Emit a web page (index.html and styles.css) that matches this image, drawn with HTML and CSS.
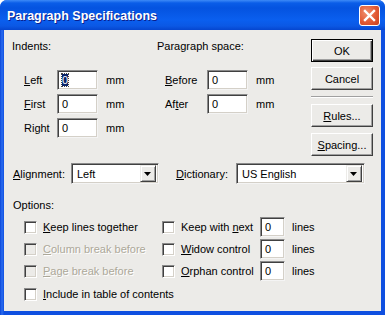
FILE: index.html
```html
<!DOCTYPE html>
<html>
<head>
<meta charset="utf-8">
<link rel="stylesheet" href="styles.css">
</head>
<body>
<div class="win">
  <div class="titlebar">
    <span class="title">Paragraph Specifications</span>
    <span class="close"><svg width="13" height="13" viewBox="0 0 13 13"><path d="M2 2 L11 11 M11 2 L2 11" stroke="#fff" stroke-width="2.4" stroke-linecap="square"/></svg></span>
  </div>
  <div class="client">
    <div class="top">
      <div class="group indents">
        <div class="heading">Indents:</div>
        <div class="fields">
          <span class="lbl"><u>L</u>eft</span><span class="edit"><span class="sel">0</span></span><span class="unit">mm</span>
          <span class="lbl"><u>F</u>irst</span><span class="edit">0</span><span class="unit">mm</span>
          <span class="lbl">Right</span><span class="edit">0</span><span class="unit">mm</span>
        </div>
      </div>
      <div class="group space">
        <div class="heading">Paragraph space:</div>
        <div class="fields">
          <span class="lbl"><u>B</u>efore</span><span class="edit">0</span><span class="unit">mm</span>
          <span class="lbl">Af<u>t</u>er</span><span class="edit">0</span><span class="unit">mm</span>
        </div>
      </div>
      <div class="buttons">
        <div class="btn default">OK</div>
        <div class="btn">Cancel</div>
        <div class="sep"></div>
        <div class="btn"><u>R</u>ules...</div>
        <div class="btn"><u>S</u>pacing...</div>
      </div>
    </div>
    <div class="combos">
      <span class="clbl"><u>A</u>lignment:</span>
      <span class="combo align"><span class="cval">Left</span><span class="arrow"><svg width="7" height="4" viewBox="0 0 7 4"><path d="M0 0 H7 L3.5 4 Z" fill="#000"/></svg></span></span>
      <span class="clbl dict"><u>D</u>ictionary:</span>
      <span class="combo dictc"><span class="cval">US English</span><span class="arrow"><svg width="7" height="4" viewBox="0 0 7 4"><path d="M0 0 H7 L3.5 4 Z" fill="#000"/></svg></span></span>
    </div>
    <div class="heading opts">Options:</div>
    <div class="options">
      <label class="chk"><span class="box"></span><span><u>K</u>eep lines together</span></label>
      <label class="chk"><span class="box"></span><span>Keep with <u>n</u>ext</span></label>
      <span class="edit small">0</span><span class="unit">lines</span>

      <label class="chk disabled"><span class="box"></span><span><u>C</u>olumn break before</span></label>
      <label class="chk"><span class="box"></span><span><u>W</u>idow control</span></label>
      <span class="edit small">0</span><span class="unit">lines</span>

      <label class="chk disabled"><span class="box"></span><span><u>P</u>age break before</span></label>
      <label class="chk"><span class="box"></span><span><u>O</u>rphan control</span></label>
      <span class="edit small">0</span><span class="unit">lines</span>

      <label class="chk wide"><span class="box"></span><span><u>I</u>nclude in table of contents</span></label>
    </div>
  </div>
</div>
</body>
</html>
```

FILE: styles.css
```css
* { box-sizing: border-box; }
html, body { margin: 0; padding: 0; background: #fff; }
body { font-family: "Liberation Sans", Arial, sans-serif; font-size: 11px; color: #000; }
u { text-decoration: underline; text-underline-offset: 1px; }

.win {
  width: 385px;
  height: 315px;
  border-radius: 7px 7px 0 0;
  display: flex;
  flex-direction: column;
  padding: 0 4px 4px 4px;
  background: linear-gradient(90deg, #0b46d8 0, #2a6cf0 2px, #0f4fe0 4px, #0f4fe0 381px);
}
.titlebar {
  height: 30px;
  margin: 0 -4px;
  padding: 0 5px 0 7px;
  border-radius: 7px 7px 0 0;
  display: flex;
  align-items: center;
  justify-content: space-between;
  background: linear-gradient(180deg, #3d8af7 0, #0a5de8 3px, #0453e0 8px, #0a5fef 20px, #0b58e4 26px, #0546cf 30px);
}
.title {
  color: #fff;
  font-family: "Liberation Sans", Arial, sans-serif;
  font-weight: bold;
  font-size: 12.5px;
  letter-spacing: 0;
  text-shadow: 1px 1px 0 #0a1e8c;
  margin-top: 1px;
}
.close {
  width: 21px;
  height: 21px;
  border: 1px solid #fff;
  border-radius: 3px;
  background: radial-gradient(circle at 35% 35%, #f0906f 0, #e25a35 55%, #c8401c 100%);
  display: flex;
  align-items: center;
  justify-content: center;
  margin-top: 1px;
}
.client {
  flex: 1;
  background: #ecebe8;
  padding: 9px 8px 0 8px;
}
.top { display: flex; }
.heading { height: 14px; line-height: 14px; }
.group.indents { width: 145px; }
.group.space { width: 154px; }
.fields {
  display: grid;
  row-gap: 4px;
  align-items: center;
  margin-top: 17px;
  grid-auto-rows: 20px;
}
.indents .fields { grid-template-columns: 33px 41px auto; margin-left: 12px; }
.space .fields { grid-template-columns: 42px 41px auto; margin-left: 8px; }
.lbl { line-height: 14px; }
.unit { margin-left: 8px; }
.edit {
  height: 20px;
  background: #fff;
  border-top: 1px solid #8a8a8a;
  border-left: 1px solid #8a8a8a;
  border-right: 1px solid #f4f4f4;
  border-bottom: 1px solid #f4f4f4;
  box-shadow: inset 1px 1px 0 #404040, inset -1px -1px 0 #d4d0c8;
  padding: 3px 0 0 4px;
  line-height: 13px;
}
.sel { background: #0a246a; color: #fff; outline: 1px dotted #444; }

.buttons { width: 62px; display: flex; flex-direction: column; }
.btn {
  height: 23px;
  display: flex;
  align-items: center;
  justify-content: center;
  background: #ecebe8;
  border-top: 1px solid #fff;
  border-left: 1px solid #fff;
  border-right: 1px solid #404040;
  border-bottom: 1px solid #404040;
  box-shadow: inset -1px -1px 0 #a0a0a0;
  margin-bottom: 5px;
}
.btn.default {
  border: 1px solid #000;
  box-shadow: inset 1px 1px 0 #fff, inset -1px -1px 0 #404040, inset -2px -2px 0 #a0a0a0;
}
.sep {
  height: 2px;
  border-top: 1px solid #a0a0a0;
  border-bottom: 1px solid #fff;
  margin: 1px 0 6px 0;
}
.buttons .btn:last-child { margin-bottom: 0; margin-top: 1px; }

.combos {
  display: flex;
  align-items: center;
  margin-top: 7px;
  height: 21px;
}
.clbl { margin-left: 1px; }
.clbl.dict { margin-left: 17px; }
.combo {
  height: 21px;
  background: #fff;
  border-top: 1px solid #8a8a8a;
  border-left: 1px solid #8a8a8a;
  border-right: 1px solid #f4f4f4;
  border-bottom: 1px solid #f4f4f4;
  box-shadow: inset 1px 1px 0 #404040, inset -1px -1px 0 #d4d0c8;
  display: flex;
  align-items: center;
  justify-content: space-between;
  padding: 2px 2px 2px 5px;
}
.combo.align { width: 88px; margin-left: 6px; }
.combo.dictc { width: 129px; margin-left: 8px; }
.cval { line-height: 14px; }
.arrow {
  width: 16px;
  height: 17px;
  background: #ecebe8;
  border-top: 1px solid #ecebe8;
  border-left: 1px solid #ecebe8;
  border-right: 1px solid #404040;
  border-bottom: 1px solid #404040;
  box-shadow: inset 1px 1px 0 #fff, inset -1px -1px 0 #a0a0a0;
  display: flex;
  align-items: center;
  justify-content: center;
}
.heading.opts { margin-top: 14px; margin-left: 1px; }

.options {
  display: grid;
  grid-template-columns: 138px 98px 32px auto;
  grid-auto-rows: 22px;
  align-items: center;
  margin-left: 12px;
  margin-top: 4px;
}
.chk { display: flex; align-items: center; gap: 6px; white-space: nowrap; }
.chk.wide { grid-column: 1 / 5; margin-top: 2px; }
.box {
  width: 13px;
  height: 13px;
  background: #fff;
  border-top: 1px solid #8a8a8a;
  border-left: 1px solid #8a8a8a;
  border-right: 1px solid #fff;
  border-bottom: 1px solid #fff;
  box-shadow: inset 1px 1px 0 #404040, inset -1px -1px 0 #d4d0c8;
  flex: none;
}
.chk.disabled { color: #aca899; text-shadow: 1px 1px 0 #fff; }
.chk.disabled .box { background: #ecebe8; }
.edit.small { width: 25px; }
.options .unit { margin-left: 0; }
```
